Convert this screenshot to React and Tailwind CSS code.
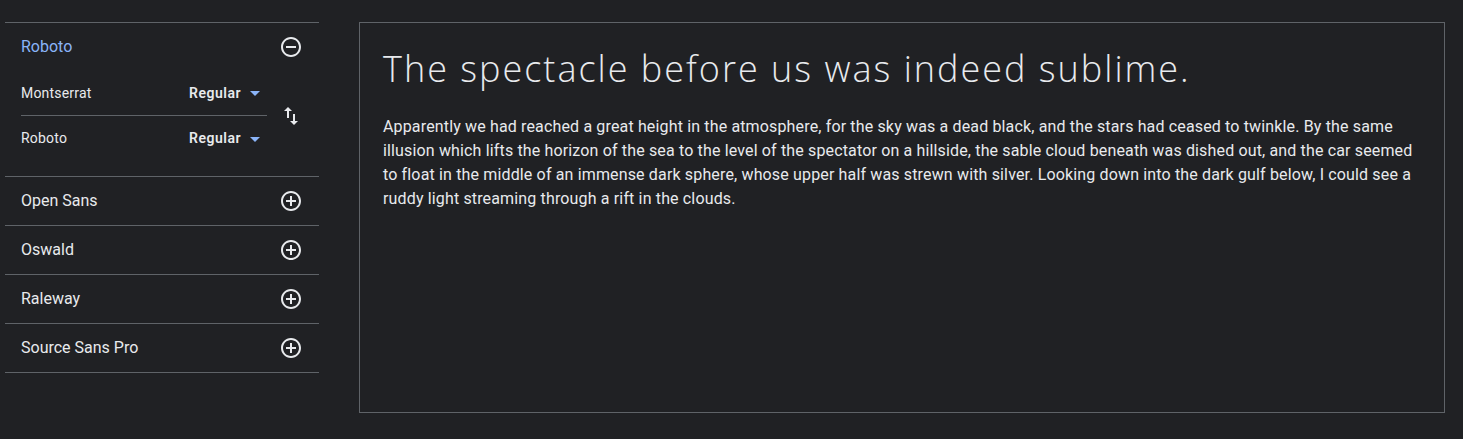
import React from "react";

const PlusCircle = () => (
  <svg width="24" height="24" viewBox="0 0 24 24" fill="#e8eaed">
    <path d="M13 7h-2v4H7v2h4v4h2v-4h4v-2h-4V7zm-1-5C6.48 2 2 6.48 2 12s4.48 10 10 10 10-4.48 10-10S17.52 2 12 2zm0 18c-4.41 0-8-3.59-8-8s3.59-8 8-8 8 3.59 8 8-3.59 8-8 8z" />
  </svg>
);

const MinusCircle = () => (
  <svg width="24" height="24" viewBox="0 0 24 24" fill="#e8eaed">
    <path d="M7 11v2h10v-2H7zm5-9C6.48 2 2 6.48 2 12s4.48 10 10 10 10-4.48 10-10S17.52 2 12 2zm0 18c-4.41 0-8-3.59-8-8s3.59-8 8-8 8 3.59 8 8-3.59 8-8 8z" />
  </svg>
);

const SwapVert = () => (
  <svg width="24" height="24" viewBox="0 0 24 24" fill="#e8eaed">
    <path d="M16 17.01V10h-2v7.01h-3L15 21l4-3.99h-3zM9 3L5 6.99h3V14h2V6.99h3L9 3z" />
  </svg>
);

const Caret = () => (
  <svg width="24" height="24" viewBox="0 0 24 24" fill="#8ab4f8">
    <path d="M7 10l5 5 5-5z" />
  </svg>
);

const SubRow = ({ name, border }) => (
  <div className={`flex items-center justify-between h-[45px] ${border ? "border-b border-[#5f6368]" : ""}`}>
    <span className="text-[14px] font-normal tracking-[0.2px] text-[#e8eaed]">{name}</span>
    <div className="flex items-center">
      <span className="text-[14px] font-semibold tracking-[0.5px] text-[#e8eaed] mr-[2px]">Regular</span>
      <Caret />
    </div>
  </div>
);

const Row = ({ name }) => (
  <div className="flex items-center justify-between h-[49px] px-4 border-b border-[#5f6368]">
    <span className="text-[16px] text-[#e8eaed]">{name}</span>
    <PlusCircle />
  </div>
);

export default function App() {
  return (
    <div
      className="w-full h-[439px] bg-[#202124] flex pt-[22px] pl-[5px] pr-[18px]"
      style={{ fontFamily: "Roboto, 'Liberation Sans', sans-serif" }}
    >
      <div className="w-[314px] shrink-0">
        <div className="border-t border-b border-[#5f6368]">
          <div className="flex items-center justify-between h-[48px] px-4">
            <span className="text-[16px] text-[#8ab4f8]">Roboto</span>
            <MinusCircle />
          </div>
          <div className="flex items-center pl-4 pr-4 pb-[15px]">
            <div className="w-[246px]">
              <SubRow name="Montserrat" border />
              <SubRow name="Roboto" />
            </div>
            <div className="flex-1 flex justify-end">
              <SwapVert />
            </div>
          </div>
        </div>
        <Row name="Open Sans" />
        <Row name="Oswald" />
        <Row name="Raleway" />
        <Row name="Source Sans Pro" />
      </div>
      <div className="flex-1 ml-[40px] h-[391px] border border-[#5f6368] pl-[23px] pr-6 pt-6">
        <h1
          className="text-[36px] leading-[44px] font-light text-[#e8eaed] tracking-[2px]"
          style={{ fontFamily: "'Open Sans', Lato, sans-serif" }}
        >
          The spectacle before us was indeed sublime.
        </h1>
        <p className="mt-6 text-[16px] leading-[24px] tracking-[0.15px] text-[#e8eaed]">
          Apparently we had reached a great height in the atmosphere, for the sky was a dead black, and the stars had ceased to twinkle. By the same illusion which lifts the horizon of the sea to the level of the spectator on a hillside, the sable cloud beneath was dished out, and the car seemed to float in the middle of an immense dark sphere, whose upper half was strewn with silver. Looking down into the dark gulf below, I could see a ruddy light streaming through a rift in the clouds.
        </p>
      </div>
    </div>
  );
}
